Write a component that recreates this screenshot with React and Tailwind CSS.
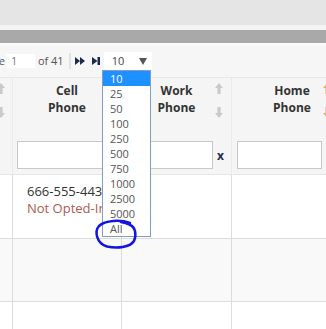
import React from "react";

const Up = ({ c = "#cacaca" }) => (
  <svg width="8" height="11" viewBox="0 0 8 11">
    <path d="M4 0 L8 5 L5.6 5 L5.6 11 L2.4 11 L2.4 5 L0 5 Z" fill={c} />
  </svg>
);
const Down = ({ c = "#cacaca" }) => (
  <svg width="8" height="11" viewBox="0 0 8 11">
    <path d="M4 11 L8 6 L5.6 6 L5.6 0 L2.4 0 L2.4 6 L0 6 Z" fill={c} />
  </svg>
);

const Arrows = ({ c }) => (
  <div className="flex flex-col gap-[13px]">
    <Up c={c} />
    <Down c={c} />
  </div>
);

const options = ["10", "25", "50", "100", "250", "500", "750", "1000", "2500", "5000", "All"];

export default function App() {
  return (
    <div className="relative w-[326px] h-[329px] overflow-hidden bg-white font-['Open_Sans',sans-serif]">
      <div className="h-[25px] bg-[#e5e5e5]" />
      <div className="h-[5px] bg-[#f4f4f4]" />
      <div className="h-[13px] bg-[#a9a9a9]" />
      {/* pager */}
      <div className="h-[34px] bg-[#f6f6f6] border-t-2 border-[#fbfbfb] flex items-center text-[11px] text-[#555] whitespace-nowrap">
        <span className="-ml-[20px]">Page</span>
        <div className="ml-[2px] w-[28px] h-[14px] bg-white flex items-center pl-[4px] text-[11px] text-[#777]">1</div>
        <span className="ml-[3px]">of 41</span>
        <div className="ml-[5px] w-[2px] h-[16px] bg-[#e2e2e2]" />
        <svg className="ml-[4px]" width="10" height="8" viewBox="0 0 10 8">
          <path d="M0 0 L5 4 L0 8 Z M5 0 L10 4 L5 8 Z" fill="#1d2a4e" />
        </svg>
        <svg className="ml-[7px]" width="8" height="8" viewBox="0 0 8 8">
          <path d="M0 0 L5.5 4 L0 8 Z" fill="#1d2a4e" />
          <rect x="5.5" y="0" width="2.5" height="8" fill="#1d2a4e" />
        </svg>
        <div className="ml-[4px] w-[48px] h-[19px] bg-white flex items-center justify-between pl-[8px] pr-[5px] text-[11px] text-[#444]">
          <span>10</span>
          <svg width="8" height="7" viewBox="0 0 8 7">
            <path d="M0 0 L8 0 L4 7 Z" fill="#555" />
          </svg>
        </div>
      </div>
      {/* header */}
      <div className="flex h-[60px] bg-[#f5f5f5] border-t border-[#e8e8e8] text-[12px] font-bold text-[#333] leading-[17px]">
        <div className="relative shrink-0 w-[13px] border-r border-[#ebebeb]">
          <div className="absolute -left-[3px] top-[5px]">
            <Arrows />
          </div>
        </div>
        <div className="shrink-0 w-[109px] border-r border-[#ebebeb] pt-[4px] text-center">
          Cell
          <br />
          Phone
        </div>
        <div className="relative shrink-0 w-[110px] border-r border-[#ebebeb] pt-[4px] text-center">
          Work
          <br />
          Phone
          <div className="absolute left-[93px] top-[5px]">
            <Arrows />
          </div>
        </div>
        <div className="relative shrink-0 w-[120px] pt-[4px] text-center">
          Home
          <br />
          Phone
          <div className="absolute left-[91px] top-[5px]">
            <Arrows c="#e3b26a" />
          </div>
        </div>
      </div>
      {/* filter */}
      <div className="flex h-[38px] bg-[#f5f5f5] border-b border-[#e6e6e6]">
        <div className="shrink-0 w-[13px] border-r border-[#ebebeb]" />
        <div className="shrink-0 w-[109px] border-r border-[#ebebeb] pt-[4px] pl-[4px]">
          <div className="w-[100px] h-[28px] bg-white border border-[#c8c8c8]" />
        </div>
        <div className="shrink-0 w-[110px] border-r border-[#ebebeb] pt-[4px] pl-[3px] flex">
          <div className="shrink-0 w-[88px] h-[28px] bg-white border border-[#c8c8c8]" />
          <div className="flex-1 flex items-center justify-center pb-[4px] pr-[3px] text-[12px] font-bold text-[#1d2a4e]">x</div>
        </div>
        <div className="shrink-0 w-[120px] pt-[4px] pl-[5px]">
          <div className="w-[85px] h-[28px] bg-white border border-[#c8c8c8]" />
        </div>
      </div>
      {/* rows */}
      <div className="flex h-[64px] bg-white border-b border-[#dcdcdc] text-[13px] leading-[17px]">
        <div className="shrink-0 w-[13px] border-r border-[#dcdcdc]" />
        <div className="shrink-0 w-[109px] border-r border-[#dcdcdc] pt-[8px] pl-[14px] whitespace-nowrap overflow-hidden">
          <div className="text-[#333]">666-555-4432</div>
          <div className="text-[#ad5b50]">Not Opted-In</div>
        </div>
        <div className="shrink-0 w-[110px] border-r border-[#dcdcdc]" />
        <div className="shrink-0 w-[120px]" />
      </div>
      <div className="flex h-[63px] bg-[#f9f9f9] border-b border-[#dcdcdc]">
        <div className="shrink-0 w-[13px] border-r border-[#dcdcdc]" />
        <div className="shrink-0 w-[109px] border-r border-[#dcdcdc]" />
        <div className="shrink-0 w-[110px] border-r border-[#dcdcdc]" />
        <div className="shrink-0 w-[120px]" />
      </div>
      <div className="flex h-[40px] bg-white">
        <div className="shrink-0 w-[13px] border-r border-[#dcdcdc]" />
        <div className="shrink-0 w-[109px] border-r border-[#dcdcdc]" />
        <div className="shrink-0 w-[110px] border-r border-[#dcdcdc]" />
        <div className="shrink-0 w-[120px]" />
      </div>
      {/* dropdown */}
      <div className="absolute left-[102px] top-[70px] w-[49px] bg-white border border-[#7f9ccb] text-[11px] text-[#555] leading-[15px]">
        {options.map((o, i) => (
          <div
            key={o}
            className={i === 0 ? "h-[15px] pl-[7px] bg-[#1e90ff] text-white" : "h-[15px] pl-[7px]"}
          >
            {o}
          </div>
        ))}
      </div>
      {/* hand-drawn circle */}
      <svg className="absolute left-0 top-0" width="326" height="329" viewBox="0 0 326 329">
        <path
          d="M130 223 C121 219.5, 105 220, 99 226 C94.5 231, 96 243, 107 246.5 C117 248.5, 130 247.5, 134 241 C137 234, 135 227, 130 225 C127 223.5, 124 222.5, 121 222"
          fill="none"
          stroke="#1414e0"
          strokeWidth="2.5"
          strokeLinecap="round"
        />
      </svg>
    </div>
  );
}
